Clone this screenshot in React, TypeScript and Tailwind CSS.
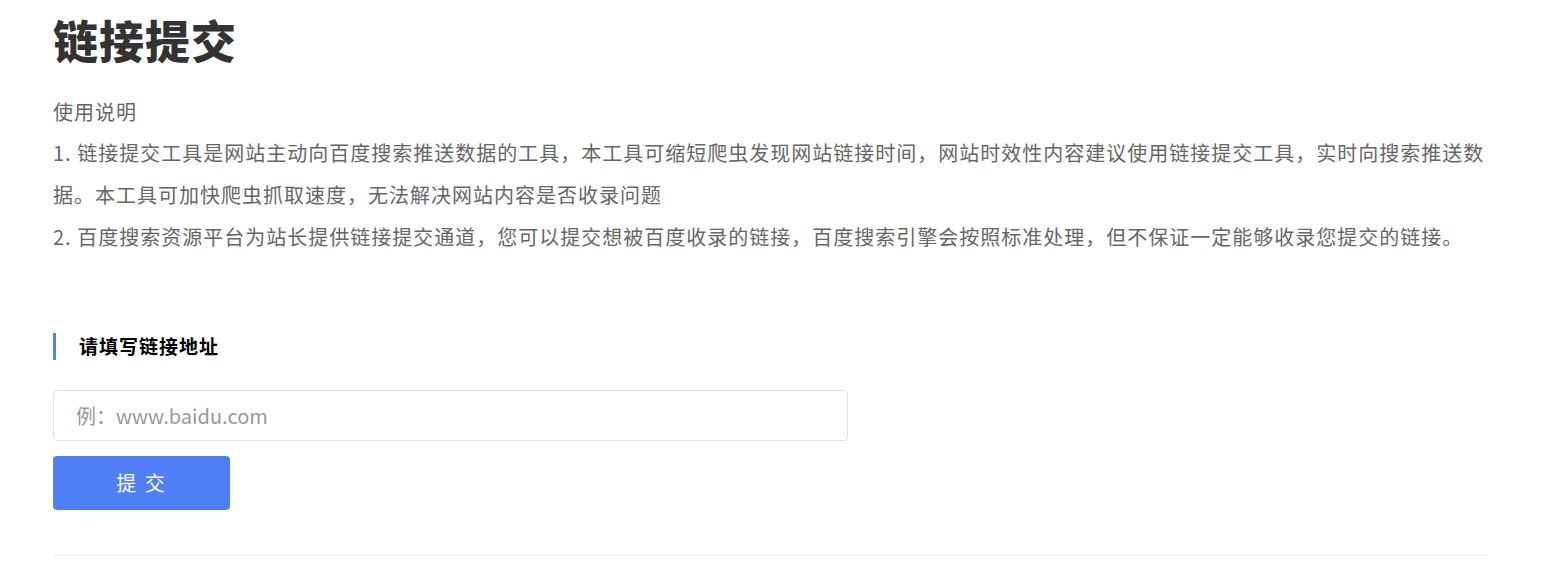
// Link submission page — title, usage notes, url input and submit button
const font = "font-['Microsoft_YaHei','Noto_Sans_CJK_SC',sans-serif]"

export default function App() {
  return (
    <div className={`${font} bg-white min-h-[568px] pl-[53px] pr-[61px] pt-[12px]`}>
      <h1 className="text-[45px] leading-[56px] font-black text-[#333] tracking-[1px]">链接提交</h1>

      {/* Usage notes */}
      <div className="mt-[24px] text-[20px] leading-[42px] tracking-[1px] text-[#666]">
        <p className="leading-[40px]">使用说明</p>
        <p>
          1. 链接提交工具是网站主动向百度搜索推送数据的工具，本工具可缩短爬虫发现网站链接时间，网站时效性内容建议使用链接提交工具，实时向搜索推送数据。本工具可加快爬虫抓取速度，无法解决网站内容是否收录问题
        </p>
        <p>
          2. 百度搜索资源平台为站长提供链接提交通道，您可以提交想被百度收录的链接，百度搜索引擎会按照标准处理，但不保证一定能够收录您提交的链接。
        </p>
      </div>

      {/* Form */}
      <div className="mt-[74px] flex items-center gap-[23px]">
        <span className="w-[3px] h-[27px] bg-[#4e7ff8]" />
        <h2 className="text-[19px] font-bold text-black tracking-[1px]">请填写链接地址</h2>
      </div>

      <input
        className="mt-[29px] block w-[795px] h-[51px] border border-[#e3e3e3] rounded-[4px] px-[22px] text-[20px] text-[#333] placeholder:text-[#999] outline-none"
        placeholder="例：www.baidu.com"
      />
      <button className="mt-[15px] block w-[177px] h-[54px] rounded-[4px] bg-[#4e7ff8] text-white text-[20px] tracking-[2px]">
        提 交
      </button>

      <div className="mt-[45px] border-t border-[#eeeeee]" />
    </div>
  )
}
